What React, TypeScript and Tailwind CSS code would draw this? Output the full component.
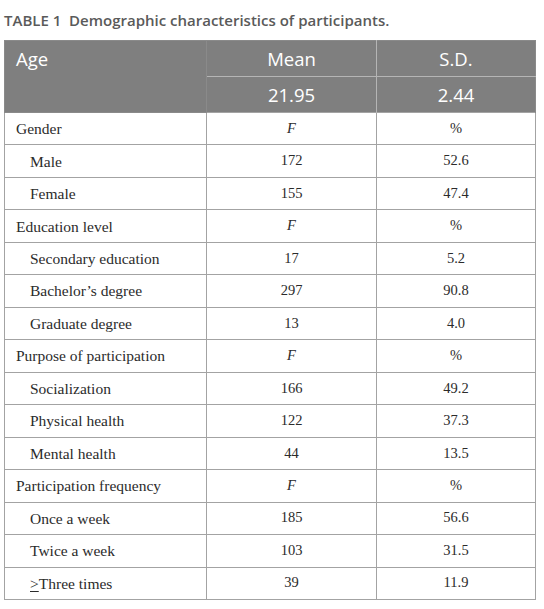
import React from "react";

type Row = { label: React.ReactNode; f: React.ReactNode; p: string; sub?: boolean };

const rows: Row[] = [
  { label: "Gender", f: <i>F</i>, p: "%" },
  { label: "Male", f: "172", p: "52.6", sub: true },
  { label: "Female", f: "155", p: "47.4", sub: true },
  { label: "Education level", f: <i>F</i>, p: "%" },
  { label: "Secondary education", f: "17", p: "5.2", sub: true },
  { label: "Bachelor\u2019s degree", f: "297", p: "90.8", sub: true },
  { label: "Graduate degree", f: "13", p: "4.0", sub: true },
  { label: "Purpose of participation", f: <i>F</i>, p: "%" },
  { label: "Socialization", f: "166", p: "49.2", sub: true },
  { label: "Physical health", f: "122", p: "37.3", sub: true },
  { label: "Mental health", f: "44", p: "13.5", sub: true },
  { label: "Participation frequency", f: <i>F</i>, p: "%" },
  { label: "Once a week", f: "185", p: "56.6", sub: true },
  { label: "Twice a week", f: "103", p: "31.5", sub: true },
  {
    label: (
      <>
        <span className="underline underline-offset-2">&gt;</span>Three times
      </>
    ),
    f: "39",
    p: "11.9",
    sub: true,
  },
];

export default function App() {
  return (
    <div className="w-[544px] h-[609px] bg-white pt-[10px]">
      <div
        className="pl-[4px] h-[20px] text-[15px] font-semibold text-[#5a5a5a] leading-[20px]"
        style={{ fontFamily: '"Open Sans", sans-serif' }}
      >
        TABLE 1&nbsp; Demographic characteristics of participants.
      </div>
      <table className="ml-[4px] mt-[10px] w-[531px] table-fixed border-collapse">
        <colgroup>
          <col className="w-[202px]" />
          <col className="w-[170px]" />
          <col className="w-[159px]" />
        </colgroup>
        <thead
          className="bg-[#7f7f7f] text-white text-[18.5px]"
          style={{ fontFamily: '"Open Sans", sans-serif' }}
        >
          <tr className="h-[36px]">
            <th
              rowSpan={2}
              className="border border-[#8a8a8a] font-normal text-left align-top pl-[11px] pt-[4px]"
            >
              Age
            </th>
            <th className="border-r border-t border-b border-[#b5b5b5] border-t-[#8a8a8a] font-normal text-center">
              Mean
            </th>
            <th className="border-t border-b border-r border-[#b5b5b5] border-t-[#8a8a8a] border-r-[#8a8a8a] font-normal text-center">
              S.D.
            </th>
          </tr>
          <tr className="h-[36px]">
            <td className="border-r border-[#b5b5b5] text-center">21.95</td>
            <td className="border-r border-[#8a8a8a] text-center">2.44</td>
          </tr>
        </thead>
        <tbody className="text-[#2b2b2b]" style={{ fontFamily: '"Liberation Serif", serif' }}>
          {rows.map((r, i) => (
            <tr key={i} className="h-[32.47px]">
              <td
                className={`border border-[#a3a3a3] text-[15.5px] ${r.sub ? "pl-[25px]" : "pl-[11px]"}`}
              >
                {r.label}
              </td>
              <td className="border border-[#a3a3a3] text-center text-[14.5px]">{r.f}</td>
              <td className="border border-[#a3a3a3] text-center text-[14.5px]">{r.p}</td>
            </tr>
          ))}
        </tbody>
      </table>
    </div>
  );
}
